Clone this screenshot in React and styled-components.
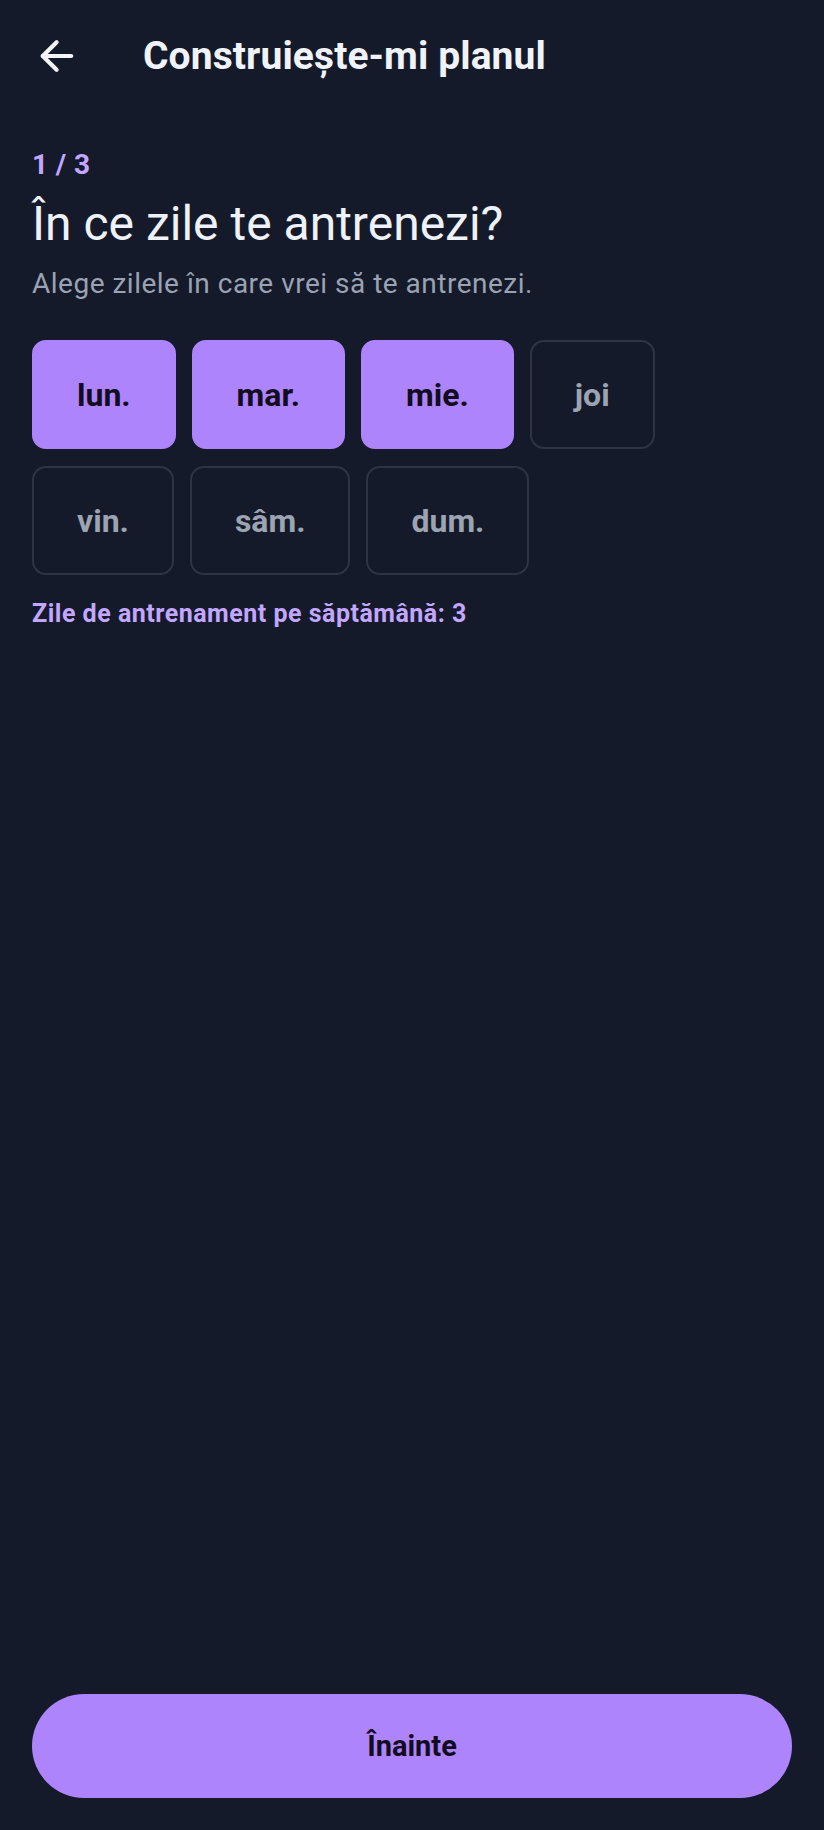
import React, { useState } from 'react';
import styled, { createGlobalStyle } from 'styled-components';

const GlobalStyle = createGlobalStyle`
	* {
		box-sizing: border-box;
	}
	html, body {
		margin: 0;
		padding: 0;
		background: #141a29;
	}
	body {
		font-family: Roboto, 'Noto Sans', sans-serif;
		color: #eef1f8;
	}
`;

const DAYS = [
	['lun.', 'mar.', 'mie.', 'joi'],
	['vin.', 'sâm.', 'dum.'],
];

const App = () => {
	const [selected, setSelected] = useState(['lun.', 'mar.', 'mie.']);

	const toggle = (day) => {
		setSelected((prev) =>
			prev.includes(day) ? prev.filter((d) => d !== day) : [...prev, day]
		);
	};

	return (
		<>
			<GlobalStyle />
			<Page>
				<Header>
					<BackButton aria-label='Înapoi'>
						<svg
							width='48'
							height='48'
							viewBox='0 0 24 24'
							fill='none'
							stroke='currentColor'
							strokeWidth='2.1'
							strokeLinecap='round'
							strokeLinejoin='round'
						>
							<path d='M19.6 12H5.4' />
							<path d='M12.3 5.1 5.4 12l6.9 6.9' />
						</svg>
					</BackButton>
					<Title>Construiește-mi planul</Title>
				</Header>
				<Content>
					<Step>1 / 3</Step>
					<Heading>În ce zile te antrenezi?</Heading>
					<Subtitle>Alege zilele în care vrei să te antrenezi.</Subtitle>
					<DayGrid>
						{DAYS.map((row, i) => (
							<DayRow key={i}>
								{row.map((day) => (
									<DayChip
										key={day}
										$active={selected.includes(day)}
										onClick={() => toggle(day)}
									>
										{day}
									</DayChip>
								))}
							</DayRow>
						))}
					</DayGrid>
					<Count>Zile de antrenament pe săptămână: {selected.length}</Count>
				</Content>
				<Footer>
					<NextButton>Înainte</NextButton>
				</Footer>
			</Page>
		</>
	);
};

export default App;

const Page = styled.div`
	min-height: 100vh;
	display: flex;
	flex-direction: column;
	background: #141a29;
`;
const Header = styled.header`
	height: 112px;
	display: flex;
	align-items: center;
	padding-left: 32px;
`;
const BackButton = styled.button`
	width: 48px;
	height: 48px;
	padding: 0;
	border: none;
	background: none;
	color: #f3f5fb;
	display: flex;
	align-items: center;
	justify-content: center;
	cursor: pointer;
`;
const Title = styled.h1`
	margin: 0 0 0 63px;
	font-size: 39px;
	line-height: 48px;
	font-weight: 700;
	color: #f1f3fa;
	letter-spacing: 0.1px;
`;
const Content = styled.main`
	flex: 1;
	padding: 37px 32px 0;
	display: flex;
	flex-direction: column;
`;
const Step = styled.div`
	font-size: 28px;
	line-height: 32px;
	font-weight: 700;
	letter-spacing: 0.4px;
	color: #c3a6ff;
`;
const Heading = styled.h2`
	margin: 15px 0 0;
	font-size: 48px;
	line-height: 56px;
	font-weight: 400;
	color: #eef1f8;
`;
const Subtitle = styled.p`
	margin: 14px 0 0;
	font-size: 28px;
	line-height: 36px;
	letter-spacing: 0.5px;
	color: #9aa2b3;
`;
const DayGrid = styled.div`
	margin-top: 38px;
	display: flex;
	flex-direction: column;
	gap: 17px;
`;
const DayRow = styled.div`
	display: flex;
	gap: 16px;
`;
const DayChip = styled.button`
	height: 109px;
	padding: 0 43px;
	border-radius: 14px;
	border: 2px solid ${({ $active }) => ($active ? '#ae84fc' : '#2e3444')};
	background: ${({ $active }) => ($active ? '#ae84fc' : 'transparent')};
	color: ${({ $active }) => ($active ? '#120c20' : '#9ca3b1')};
	font-family: Roboto, sans-serif;
	font-size: 32px;
	font-weight: 700;
	cursor: pointer;
`;
const Count = styled.div`
	margin-top: 23px;
	font-size: 25px;
	line-height: 32px;
	letter-spacing: 0.5px;
	font-weight: 700;
	color: #c3a6ff;
`;
const Footer = styled.footer`
	padding: 0 32px 32px;
`;
const NextButton = styled.button`
	width: 100%;
	height: 104px;
	border: none;
	border-radius: 52px;
	background: #ae84fc;
	color: #120c20;
	font-family: Roboto, sans-serif;
	font-size: 29px;
	font-weight: 700;
	cursor: pointer;
`;
